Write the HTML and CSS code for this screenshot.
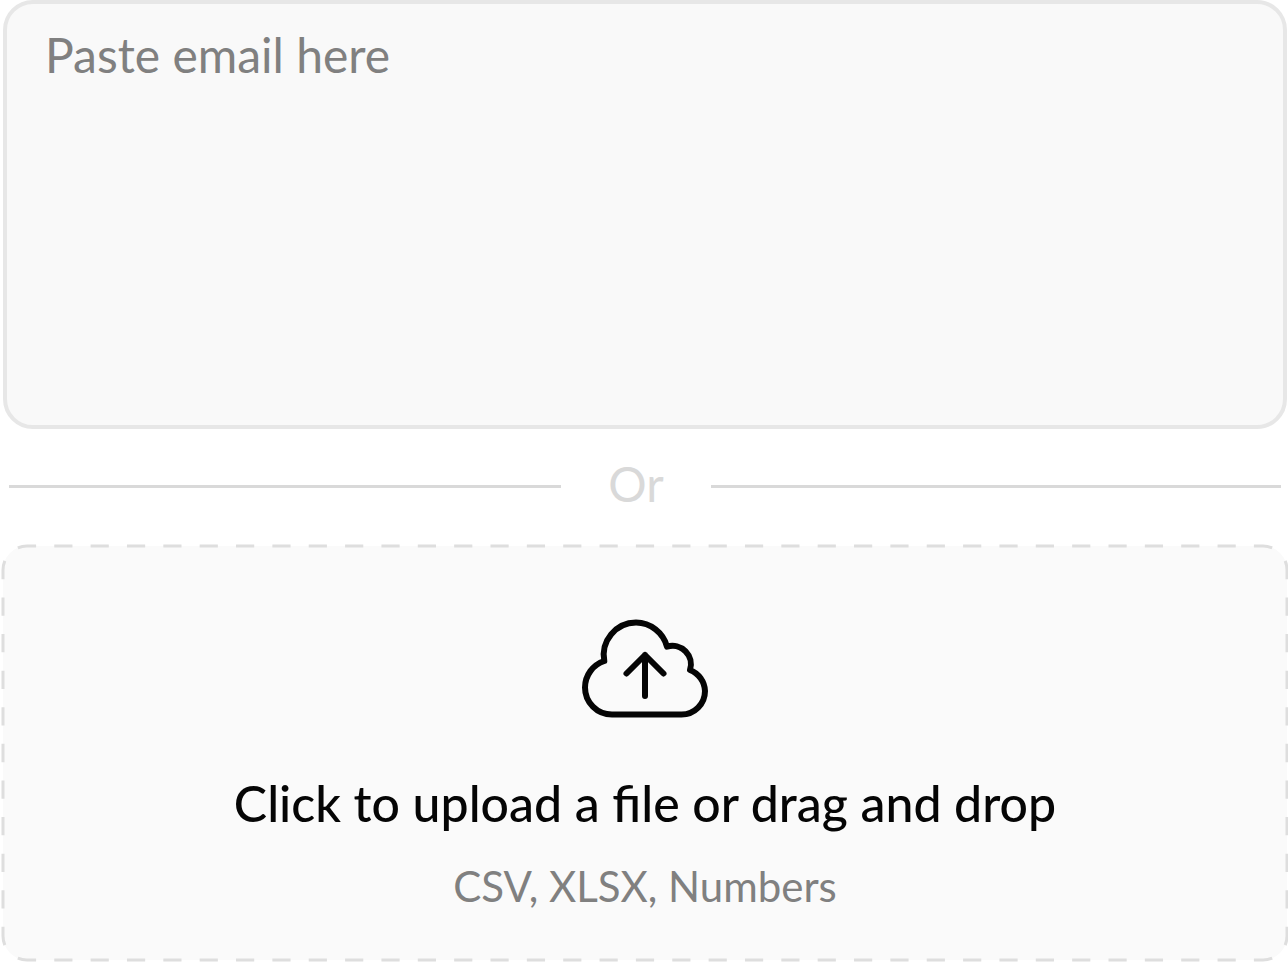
FILE: index.html
```
<!DOCTYPE html>
<html lang="en">
<head>
<meta charset="utf-8">
<meta name="viewport" content="width=device-width, initial-scale=1">
<title>Import</title>
<link rel="stylesheet" href="styles.css">
</head>
<body>
<form class="import">
  <textarea class="email" placeholder="Paste email here" aria-label="Paste email here"></textarea>

  <div class="divider">
    <span class="rule"></span>
    <span class="or">Or</span>
    <span class="rule"></span>
  </div>

  <label class="dropzone">
    <input class="file" type="file" accept=".csv,.xlsx,.numbers">
    <svg class="outline" aria-hidden="true">
      <svg class="run-x" x="24" y="0"><line x2="100%" pathLength="34"/></svg>
      <svg class="run-x" x="24" y="100%"><line x2="100%" pathLength="34"/></svg>
      <svg class="run-y" x="0" y="24"><line y2="100%" pathLength="10"/></svg>
      <svg class="run-y" x="100%" y="24"><line y2="100%" pathLength="10"/></svg>
      <svg x="0" y="0"><path d="M0 24A24 24 0 0 1 24 0" pathLength="1"/></svg>
      <svg x="100%" y="0"><path d="M-24 0A24 24 0 0 1 0 24" pathLength="1"/></svg>
      <svg x="100%" y="100%"><path d="M0 -24A24 24 0 0 1 -24 0" pathLength="1"/></svg>
      <svg x="0" y="100%"><path d="M24 0A24 24 0 0 1 0 -24" pathLength="1"/></svg>
    </svg>
    <svg class="cloud" width="130" height="102" viewBox="0 0 130 102" aria-hidden="true">
      <path d="M24.3 43A32.5 32.5 0 0 1 56 4.5A32.5 32.5 0 0 1 87 28.6A18.5 18.5 0 0 1 110 52A23.5 23.5 0 0 1 125 73A23.5 23.5 0 0 1 101.5 96.5H32A27 27 0 0 1 5 69.5A28 28 0 0 1 24.3 43Z"/>
      <path d="M65 78V37M46.5 55.5L65 37L83.5 55.5"/>
    </svg>
    <span class="title">Click to upload a file or drag and drop</span>
    <span class="formats">CSV, XLSX, Numbers</span>
  </label>
</form>
</body>
</html>
```
FILE: styles.css
```
* {
  box-sizing: border-box;
}

body {
  margin: 0;
  background: #ffffff;
  font-family: Lato, "Liberation Sans", sans-serif;
}

.import {
  display: flex;
  flex-direction: column;
  padding: 0 1px 2px 3px;
}

.email {
  display: block;
  width: 100%;
  height: 429px;
  padding: 22px 38px;
  border: 4px solid #e7e7e7;
  border-radius: 30px;
  background: #f9f9f9;
  color: #000000;
  font: inherit;
  font-size: 48px;
  line-height: 58px;
  resize: none;
  outline: none;
}

.email::placeholder {
  color: #808080;
  opacity: 1;
}

.divider {
  display: grid;
  grid-template-columns: 552fr auto 570fr;
  align-items: center;
  gap: 47px;
  padding: 26px 6px 33px;
}

.rule {
  height: 3px;
  margin-top: 4px;
  background: #d9d9d9;
}

.or {
  color: #d9d9d9;
  font-size: 48px;
  line-height: 58px;
}

.dropzone {
  position: relative;
  display: flex;
  flex-direction: column;
  align-items: center;
  padding: 72px 24px 49px;
  border-radius: 24px;
  background: #fafafa;
  cursor: pointer;
}

.file {
  position: absolute;
  width: 1px;
  height: 1px;
  opacity: 0;
}

/* Dashed outline centred on the edge of the drop zone */
.outline {
  position: absolute;
  inset: 0;
  width: 100%;
  height: 100%;
  fill: none;
  stroke: #dedede;
  stroke-width: 3px;
}

.outline,
.outline svg {
  overflow: visible;
}

.run-x {
  width: calc(100% - 48px);
}

.run-y {
  height: calc(100% - 48px);
}

.run-x line,
.run-y line {
  stroke-dasharray: 0.5 0.5;
  stroke-dashoffset: 0.25;
}

.outline path {
  stroke-dasharray: 0.25 0.5;
}

.cloud {
  fill: none;
  stroke: #050505;
  stroke-width: 6px;
  stroke-linecap: round;
  stroke-linejoin: round;
}

.title {
  margin-top: 53px;
  color: #050505;
  font-size: 50px;
  font-weight: 500;
  line-height: 60px;
  text-align: center;
}

.formats {
  margin-top: 28px;
  color: #808080;
  font-size: 42px;
  line-height: 50px;
}
```
